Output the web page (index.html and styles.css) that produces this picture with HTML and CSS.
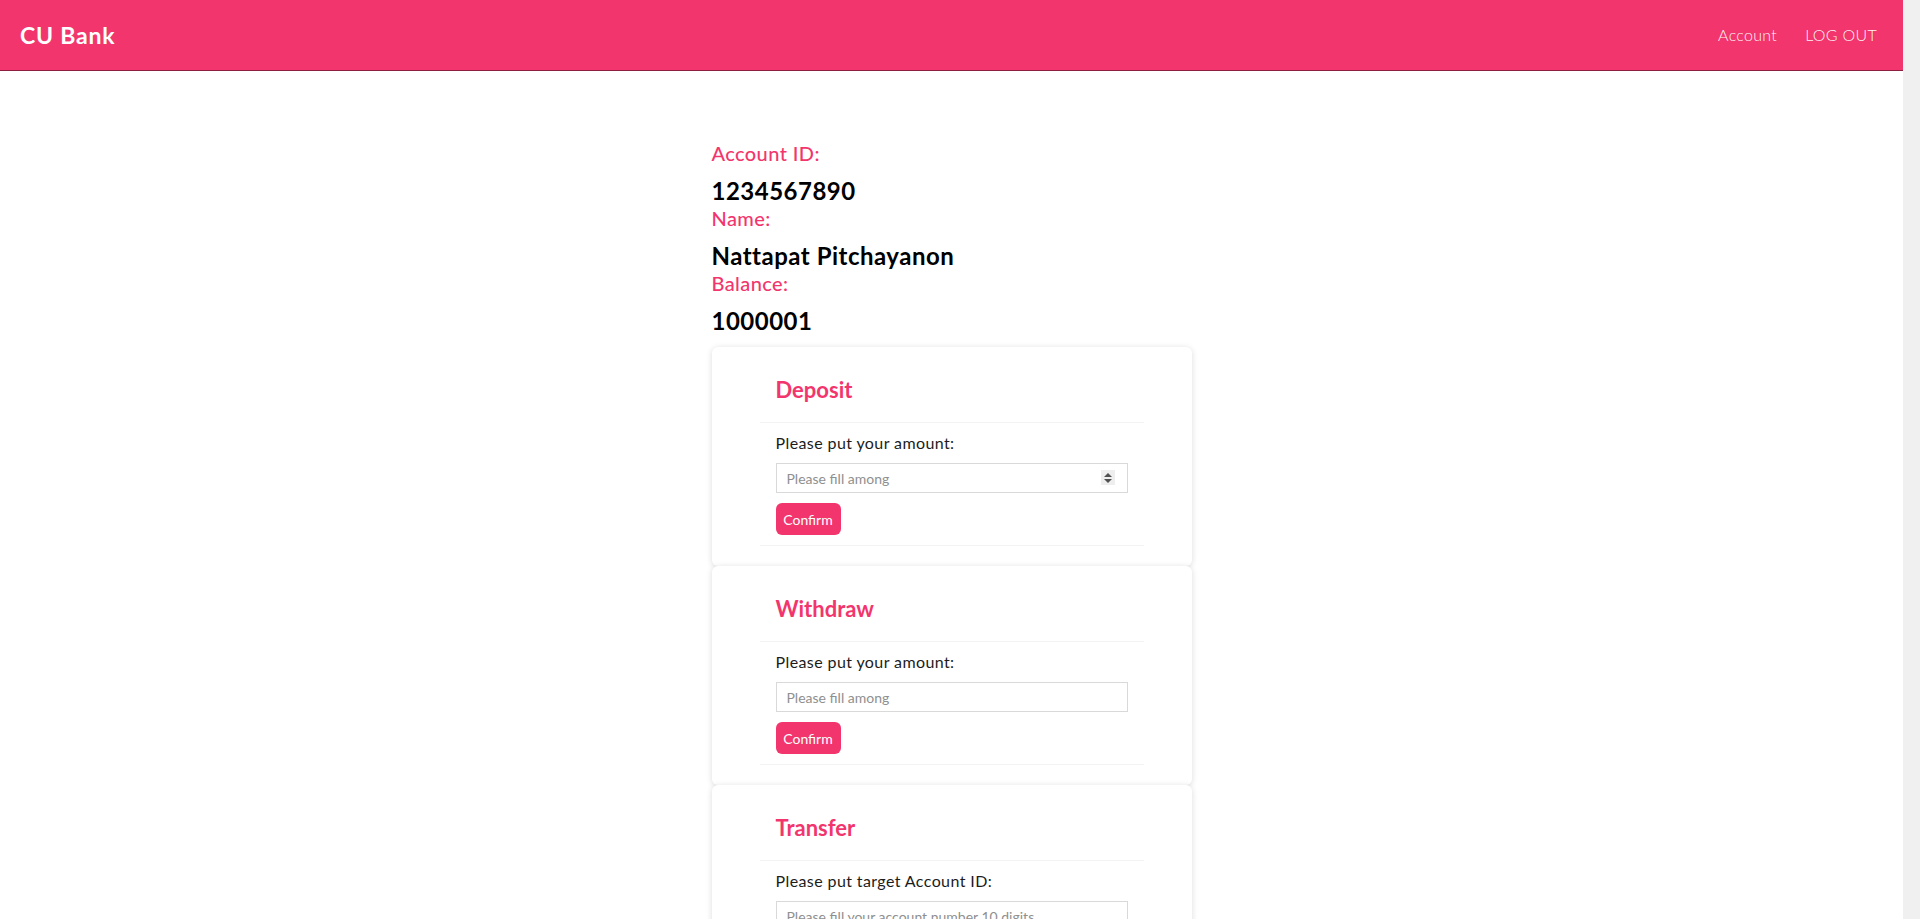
FILE: index.html
```html
<!DOCTYPE html>
<html lang="en">
<head>
<meta charset="utf-8">
<title>CU Bank</title>
<link rel="stylesheet" href="styles.css">
</head>
<body>
<nav class="navbar">
  <a class="brand" href="#">CU Bank</a>
  <div class="nav-links">
    <a class="nav-link" href="#">Account</a>
    <a class="nav-link" href="#">LOG OUT</a>
  </div>
</nav>
<main class="main">
  <section class="info">
    <div class="info-label">Account ID:</div>
    <div class="info-value">1234567890</div>
    <div class="info-label">Name:</div>
    <div class="info-value">Nattapat Pitchayanon</div>
    <div class="info-label">Balance:</div>
    <div class="info-value">1000001</div>
  </section>

  <section class="card">
    <div class="card-head"><h2 class="card-title">Deposit</h2></div>
    <div class="card-body">
      <label class="field-label">Please put your amount:</label>
      <div class="input-wrap">
        <input class="field" type="text" placeholder="Please fill among">
        <span class="spinner"><span class="tri-up"></span><span class="tri-down"></span></span>
      </div>
      <button class="btn">Confirm</button>
    </div>
  </section>

  <section class="card">
    <div class="card-head"><h2 class="card-title">Withdraw</h2></div>
    <div class="card-body">
      <label class="field-label">Please put your amount:</label>
      <div class="input-wrap">
        <input class="field" type="text" placeholder="Please fill among">
      </div>
      <button class="btn">Confirm</button>
    </div>
  </section>

  <section class="card">
    <div class="card-head"><h2 class="card-title">Transfer</h2></div>
    <div class="card-body">
      <label class="field-label">Please put target Account ID:</label>
      <div class="input-wrap">
        <input class="field" type="text" placeholder="Please fill your account number 10 digits">
      </div>
      <label class="field-label">Please put your amount:</label>
      <div class="input-wrap">
        <input class="field" type="text" placeholder="Please fill among">
      </div>
      <button class="btn">Confirm</button>
    </div>
  </section>
</main>
</body>
</html>
```
FILE: styles.css
```css
html {
  margin: 0;
  padding: 0;
  background: #f0f0f0;
}
body {
  margin: 0 17px 0 0;
  padding: 0;
  min-height: 100vh;
  background: #ffffff;
  font-family: "Lato", "Noto Sans", sans-serif;
  color: #212529;
}
.navbar {
  height: 70px;
  background: #f2366d;
  border-bottom: 1px solid #8e1d42;
  display: flex;
  align-items: center;
  justify-content: space-between;
  padding: 0 26px 0 20px;
}
.brand {
  color: #fff;
  font-size: 23px;
  line-height: 26px;
  font-weight: 700;
  letter-spacing: 0.8px;
  text-decoration: none;
}
.nav-links {
  display: flex;
  gap: 28px;
}
.nav-link {
  color: rgba(255, 255, 255, 0.96);
  font-size: 16px;
  line-height: 24px;
  font-weight: 300;
  letter-spacing: 0.3px;
  text-decoration: none;
}
.main {
  width: 480px;
  margin: 0 auto;
  padding: 70px 0 60px;
}
.info {
  margin-bottom: 12px;
}
.info-label {
  color: #f2366d;
  font-size: 20px;
  line-height: 24px;
  font-weight: 500;
  letter-spacing: 0.4px;
  margin-bottom: 11px;
}
.info-value {
  color: #000;
  font-size: 24px;
  line-height: 29px;
  font-weight: 700;
  letter-spacing: 0.5px;
  margin-bottom: 1px;
}
.card {
  background: #fff;
  border-radius: 6px;
  box-shadow: 0 1px 6px rgba(0, 0, 0, 0.14);
  padding: 20px 48px;
}
.card-head {
  padding: 10px 16px 19px;
  border-bottom: 1px solid #f3f3f3;
}
.card-title {
  margin: 0;
  color: #f2366d;
  font-size: 22px;
  line-height: 26px;
  font-weight: 700;
}
.card-body {
  padding: 8px 16px 10px;
  border-bottom: 1px solid #f3f3f3;
  display: flex;
  flex-direction: column;
  align-items: flex-start;
}
.field-label {
  font-size: 16px;
  line-height: 24px;
  font-weight: 400;
  color: #1c1c1c;
  letter-spacing: 0.4px;
  margin-bottom: 8px;
}
.input-wrap {
  position: relative;
  width: 352px;
  margin-bottom: 10px;
}
.field {
  display: block;
  box-sizing: border-box;
  width: 100%;
  height: 30px;
  border: 1px solid #d9d9d9;
  border-radius: 0;
  padding: 0 10px;
  font-family: inherit;
  font-size: 14px;
  font-weight: 400;
  color: #333;
  outline: none;
}
.field::placeholder {
  color: #8f8f8f;
}
.spinner {
  position: absolute;
  right: 13px;
  top: 7px;
  width: 14px;
  height: 15px;
  background: #eeeeee;
  display: flex;
  flex-direction: column;
  align-items: center;
  justify-content: center;
  gap: 2px;
}
.tri-up {
  width: 0;
  height: 0;
  border-left: 4px solid transparent;
  border-right: 4px solid transparent;
  border-bottom: 4px solid #505050;
}
.tri-down {
  width: 0;
  height: 0;
  border-left: 4px solid transparent;
  border-right: 4px solid transparent;
  border-top: 4px solid #505050;
}
.btn {
  height: 32px;
  width: 65px;
  padding: 0;
  border: none;
  border-radius: 6px;
  background: #f2366d;
  color: #fff;
  font-family: inherit;
  font-size: 14px;
  cursor: pointer;
}
```
